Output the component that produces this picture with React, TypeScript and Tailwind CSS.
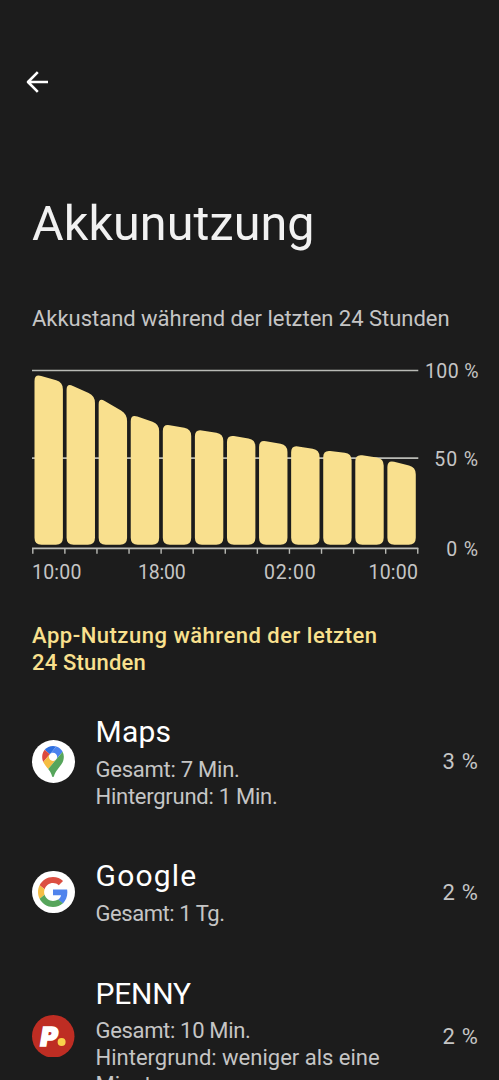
import React from "react";

type Point = [number, number];

const BARS: Point[] = [
  [10, 18.3],
  [19, 32],
  [33.4, 50],
  [50.3, 60],
  [60, 65],
  [65.3, 70],
  [71, 75.5],
  [76, 81],
  [81.3, 86],
  [86.3, 89.5],
  [90.3, 94.5],
  [96, 103.3],
];

const BAR_BOTTOM = 180.8;
const STEP = 32.08;

function barPath(index: number, left: number, right: number) {
  const x0 = 2.5 + index * STEP;
  const pts: Point[] = [
    [x0, left],
    [x0 + 28.4, right],
    [x0 + 28.4, BAR_BOTTOM],
    [x0, BAR_BOTTOM],
  ];
  const radius = 7;
  const toward = (a: Point, b: Point): Point => {
    const d = Math.hypot(b[0] - a[0], b[1] - a[1]);
    return [a[0] + ((b[0] - a[0]) * radius) / d, a[1] + ((b[1] - a[1]) * radius) / d];
  };
  return (
    pts
      .map((p, i) => {
        const a = toward(p, pts[(i + 3) % 4]);
        const b = toward(p, pts[(i + 1) % 4]);
        return `${i ? "L" : "M"}${a[0]} ${a[1]}Q${p[0]} ${p[1]} ${b[0]} ${b[1]}`;
      })
      .join("") + "Z"
  );
}

function Chart() {
  return (
    <svg width="388" height="196" viewBox="0 0 388 196" className="block shrink-0">
      <g stroke="#b9bab5" strokeWidth="1.7" fill="none">
        <path d="M0 6.5H386.3M0 94.2H386.3M0 184.3H386.3" />
        {Array.from({ length: 13 }, (_, i) => (
          <path key={i} d={`M${0.8 + i * STEP} 184V189.8`} strokeWidth="1.4" />
        ))}
      </g>
      {BARS.map(([l, r], i) => (
        <path key={i} d={barPath(i, l, r)} fill="#f9e08e" />
      ))}
    </svg>
  );
}

function MapsIcon() {
  return (
    <span className="flex size-[42.5px] items-center justify-center rounded-full bg-white">
      <svg width="22" height="31" viewBox="0 0 92.3 132.3" className="block">
        <path fill="#2f6fe0" d="M60.2 2.2C55.8.8 51 0 46.1 0 32 0 19.3 6.4 10.8 16.5l21.8 18.3L60.2 2.2z" />
        <path fill="#dc4a3d" d="M10.8 16.5C4.1 24.5 0 34.9 0 46.1c0 8.7 1.7 15.7 4.6 22l28-33.3-21.8-18.3z" />
        <path fill="#4a83ee" d="M46.2 28.5c9.8 0 17.7 7.9 17.7 17.7 0 4.3-1.6 8.3-4.2 11.4 0 0 13.9-16.6 27.5-32.7-5.6-10.8-15.3-19-27-22.7L32.6 34.8c3.3-3.8 8.1-6.3 13.6-6.3" />
        <path fill="#f5bd41" d="M46.2 63.8c-9.8 0-17.7-7.9-17.7-17.7 0-4.3 1.5-8.3 4.1-11.3l-28 33.3c4.8 10.6 12.8 19.2 21 29.9l34.1-40.5c-3.3 3.9-8.1 6.3-13.5 6.3" />
        <path fill="#56a55b" d="M59.1 109.2c15.4-24.1 33.3-35 33.3-63 0-7.7-1.9-14.9-5.2-21.3L25.6 98c2.6 3.4 5.3 7.3 7.9 11.3 9.4 14.5 6.8 23.1 12.8 23.1s3.4-8.7 12.8-23.2" />
      </svg>
    </span>
  );
}

function GoogleIcon() {
  return (
    <span className="flex size-[42.5px] items-center justify-center rounded-full bg-white">
      <svg width="30" height="30" viewBox="0 0 48 48" className="block">
        <path fill="#dc4f42" d="M24 9.5c3.54 0 6.71 1.22 9.21 3.6l6.85-6.85C35.9 2.38 30.47 0 24 0 14.62 0 6.51 5.38 2.56 13.22l7.98 6.19C12.43 13.72 17.74 9.5 24 9.5z" />
        <path fill="#5084ed" d="M46.98 24.55c0-1.57-.15-3.09-.38-4.55H24v9.02h12.94c-.58 2.96-2.26 5.48-4.78 7.18l7.73 6c4.51-4.18 7.09-10.36 7.09-17.65z" />
        <path fill="#f5be45" d="M10.53 28.59c-.48-1.45-.76-2.99-.76-4.59s.27-3.14.76-4.59l-7.98-6.19C.92 16.46 0 20.12 0 24c0 3.88.92 7.54 2.56 10.78l7.97-6.19z" />
        <path fill="#56a55b" d="M24 48c6.48 0 11.93-2.13 15.89-5.81l-7.73-6c-2.15 1.45-4.92 2.3-8.16 2.3-6.26 0-11.57-4.22-13.47-9.91l-7.98 6.19C6.51 42.62 14.62 48 24 48z" />
      </svg>
    </span>
  );
}

function PennyIcon() {
  return (
    <svg width="42.5" height="42.5" viewBox="0 0 42.5 42.5" className="block">
      <circle cx="21.25" cy="21.25" r="21.25" fill="#be2d23" />
      <text
        x="8.6"
        y="30.6"
        fill="#fff"
        stroke="#fff"
        strokeWidth="1.6"
        className="font-['Inter',sans-serif] text-[26px] font-black italic"
      >
        P
      </text>
      <circle cx="29.6" cy="27" r="4.8" fill="#be2d23" />
      <circle cx="29.6" cy="27" r="4" fill="#f9d24b" />
    </svg>
  );
}

const APPS = [
  {
    name: "Maps",
    nameClass: "tracking-[0.2px]",
    icon: <MapsIcon />,
    lines: [
      { text: "Gesamt: 7 Min.", cls: "tracking-[-0.25px]" },
      { text: "Hintergrund: 1 Min.", cls: "tracking-[-0.26px]" },
    ],
    percent: "3 %",
  },
  {
    name: "Google",
    nameClass: "tracking-[1.2px]",
    icon: <GoogleIcon />,
    lines: [{ text: "Gesamt: 1 Tg.", cls: "tracking-[-0.45px]" }],
    percent: "2 %",
  },
  {
    name: "PENNY",
    nameClass: "tracking-[-0.2px]",
    icon: <PennyIcon />,
    lines: [
      { text: "Gesamt: 10 Min.", cls: "tracking-[-0.33px]" },
      { text: "Hintergrund: weniger als eine", cls: "tracking-[0px]" },
      { text: "Minute", cls: "" },
    ],
    percent: "2 %",
  },
];

export default function App() {
  return (
    <main className="h-[1080px] w-[499px] overflow-hidden bg-[#1c1c1c] pl-8 font-['Roboto','Noto_Sans',sans-serif] text-[#c5c5c5]">
      <header className="h-[195px] pt-[71px]">
        <button aria-label="Zurück" className="-ml-1.5 block">
          <svg width="22" height="22" viewBox="0 0 22 22" fill="none" stroke="#fff" strokeWidth="2.6" className="block">
            <path d="M22 11H2.2M11.8 1.2L2 11l9.8 9.8" strokeLinejoin="round" />
          </svg>
        </button>
      </header>

      <h1 className="h-[110.5px] text-[48.5px] leading-[57px] tracking-[0.08px] text-[#f1f1f1]">Akkunutzung</h1>

      <p className="text-[22px] leading-[26px] tracking-[-0.02px]">Akkustand während der letzten 24 Stunden</p>

      <section className="mt-[27.5px] flex h-[201px]">
        <div className="w-[388px] shrink-0 pt-[5px]">
          <Chart />
        </div>
        <div className="flex w-[59px] flex-col items-end pt-px text-[19.5px] leading-6">
          <span className="tracking-[0.4px]">100&nbsp;%</span>
          <span className="mt-[64px] tracking-[0.9px]">50&nbsp;%</span>
          <span className="mt-[66px] tracking-[0.9px]">0&nbsp;%</span>
        </div>
      </section>

      <div className="flex h-6 pt-px text-[19.5px] leading-6">
        <span className="w-[106px] tracking-[0.2px]">10:00</span>
        <span className="w-[126px] tracking-[-0.2px]">18:00</span>
        <span className="w-[104.5px] tracking-[0.8px]">02:00</span>
        <span className="tracking-[0.2px]">10:00</span>
      </div>

      <h2 className="mt-[38px] w-[380px] text-[22px] leading-[27px] font-medium text-[#f9e08e]">
        <span className="block tracking-[0.51px]">App-Nutzung während der letzten</span>
        <span className="block tracking-[0.2px]">24 Stunden</span>
      </h2>

      <ul className="mt-[38.4px] flex flex-col gap-[48.3px]">
        {APPS.map((app) => (
          <li key={app.name} className="flex items-center">
            <div className="w-[63.5px] shrink-0 pb-0.5">{app.icon}</div>
            <div className="grow">
              <div className={`h-[41.8px] text-[30px] leading-[35px] text-white ${app.nameClass}`}>{app.name}</div>
              {app.lines.map((line) => (
                <div key={line.text} className={`text-[22px] leading-[27px] ${line.cls}`}>
                  {line.text}
                </div>
              ))}
            </div>
            <div className="pr-[20.5px] pb-px text-[22px] leading-[27px] tracking-[0.7px]">{app.percent}</div>
          </li>
        ))}
      </ul>
    </main>
  );
}
